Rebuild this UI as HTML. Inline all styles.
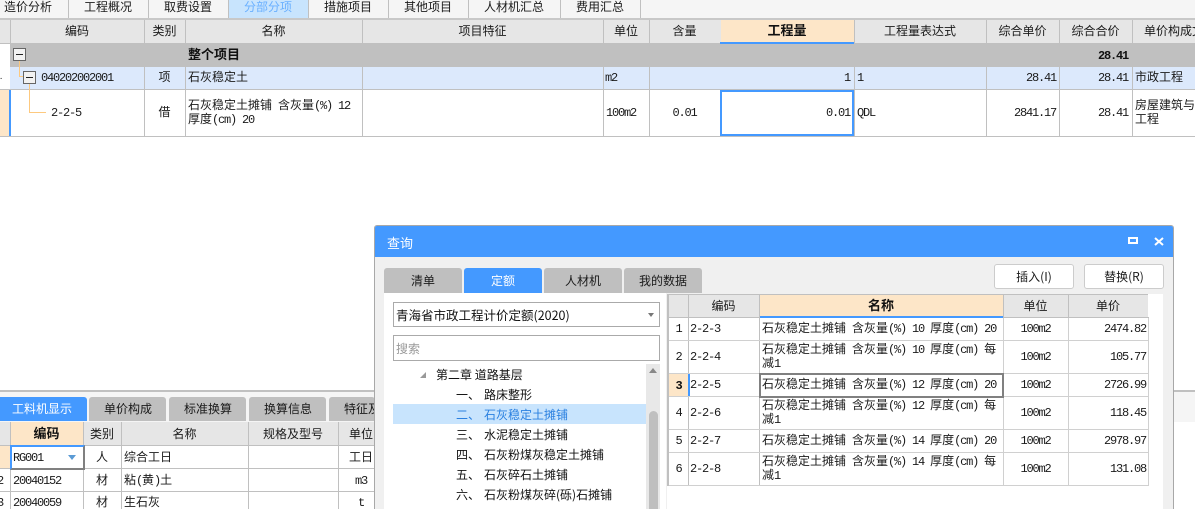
<!DOCTYPE html>
<html lang="zh"><head><meta charset="utf-8"><title>查询</title>
<style>
html,body{margin:0;padding:0;background:#fff}
#p{position:relative;width:1195px;height:509px;overflow:hidden;background:#fff;font:12px/14px "WenQuanYi Zen Hei","Noto Sans CJK SC",sans-serif;color:#1a1a1a}
#p div,#p span.t{position:absolute}
span.t{white-space:pre;height:14px}
i{font:normal 12px/14px "Liberation Mono",monospace;letter-spacing:-1.2px}
.c{text-align:center}.r{text-align:right}
.s{font-family:"Noto Sans CJK SC",sans-serif}
.hb{font-weight:bold;color:#111;font-size:13px}
.v{width:1px;background:#c0c0c0}
.h{height:1px;background:#c0c0c0}
.g{background:#d0d0d0}
.tab{background:#bfbfbf;border-radius:3px 3px 0 0}
</style></head><body><div id="p">

<!-- top tabs -->
<div style="left:0;top:0;width:1195px;height:18px;background:#f5f5f5"></div>
<div style="left:229px;top:0;width:79px;height:18px;background:#c8e4fd"></div>
<div class="h" style="left:0;top:18px;width:1195px;height:2px;background:#c8c8c8"></div>
<div class="v" style="left:68px;top:0;height:18px"></div>
<div class="v" style="left:148px;top:0;height:18px"></div>
<div class="v" style="left:228px;top:0;height:18px"></div>
<div class="v" style="left:308px;top:0;height:18px"></div>
<div class="v" style="left:388px;top:0;height:18px"></div>
<div class="v" style="left:468px;top:0;height:18px"></div>
<div class="v" style="left:560px;top:0;height:18px"></div>
<div class="v" style="left:640px;top:0;height:18px"></div>
<span class="t" style="left:4px;top:0">造价分析</span>
<span class="t" style="left:84px;top:0">工程概况</span>
<span class="t" style="left:164px;top:0">取费设置</span>
<span class="t" style="left:244px;top:0;color:#6ab0ff">分部分项</span>
<span class="t" style="left:324px;top:0">措施项目</span>
<span class="t" style="left:404px;top:0">其他项目</span>
<span class="t" style="left:484px;top:0">人材机汇总</span>
<span class="t" style="left:576px;top:0">费用汇总</span>

<!-- top table -->
<div style="left:0;top:20px;width:1195px;height:23px;background:#e6e6e6"></div>
<div style="left:721px;top:20px;width:133px;height:22px;background:#fde6c8"></div>
<div style="left:720px;top:42px;width:134px;height:2px;background:#4499ff"></div>
<div style="left:10px;top:67px;width:1185px;height:22px;background:#dce9fc"></div>
<div style="left:0;top:90px;width:9px;height:46px;background:#fde6c8"></div>
<div style="left:9px;top:90px;width:2px;height:46px;background:#4499ff"></div>
<div class="v" style="left:10px;top:20px;height:47px"></div>
<div class="v" style="left:144px;top:20px;height:116px"></div>
<div class="v" style="left:185px;top:20px;height:116px"></div>
<div class="v" style="left:362px;top:20px;height:116px"></div>
<div class="v" style="left:603px;top:20px;height:116px"></div>
<div class="v" style="left:649px;top:20px;height:116px"></div>
<div class="v" style="left:986px;top:20px;height:116px"></div>
<div class="v" style="left:1059px;top:20px;height:116px"></div>
<div class="v" style="left:1132px;top:20px;height:116px"></div>
<div class="v" style="left:854px;top:20px;height:116px"></div>
<div class="h" style="left:0;top:43px;width:720px"></div>
<div class="h" style="left:854px;top:43px;width:341px"></div>
<div style="left:11px;top:44px;width:1184px;height:22px;background:#c0c0c0"></div>
<div class="h" style="left:10px;top:66px;width:1185px"></div>
<div class="h" style="left:0;top:89px;width:1195px"></div>
<div class="h" style="left:0;top:136px;width:1195px"></div>
<div style="left:720px;top:90px;width:130px;height:42px;border:2px solid #4499ff"></div>

<span class="t c" style="left:10px;top:24px;width:134px">编码</span>
<span class="t c" style="left:144px;top:24px;width:41px">类别</span>
<span class="t c" style="left:185px;top:24px;width:177px">名称</span>
<span class="t c" style="left:362px;top:24px;width:241px">项目特征</span>
<span class="t c" style="left:603px;top:24px;width:46px">单位</span>
<span class="t c" style="left:649px;top:24px;width:71px">含量</span>
<span class="t c hb" style="left:720px;top:23px;width:134px">工程量</span>
<span class="t c" style="left:854px;top:24px;width:132px">工程量表达式</span>
<span class="t c" style="left:986px;top:24px;width:73px">综合单价</span>
<span class="t c" style="left:1059px;top:24px;width:73px">综合合价</span>
<span class="t" style="left:1144px;top:24px">单价构成文件</span>

<!-- tree -->
<div style="left:19px;top:60px;width:1px;height:17px;background:#fdc97f"></div>
<div style="left:19px;top:76px;width:5px;height:1px;background:#fdc97f"></div>
<div style="left:29px;top:83px;width:1px;height:30px;background:#fdc97f"></div>
<div style="left:29px;top:112px;width:17px;height:1px;background:#fdc97f"></div>
<div style="left:13px;top:48px;width:11px;height:11px;border:1px solid #666;background:#f2f2f2"></div>
<div style="left:16px;top:54px;width:7px;height:1px;background:#222"></div>
<div style="left:23px;top:71px;width:11px;height:11px;border:1px solid #666;background:#f2f2f2"></div>
<div style="left:26px;top:77px;width:7px;height:1px;background:#222"></div>

<span class="t hb" style="left:188px;top:47px">整个项目</span>
<span class="t r hb" style="left:1059px;top:47px;width:69px"><i style="font-weight:bold">28.41</i></span>

<span class="t" style="left:0;top:70px;font-size:8px">.</span>
<span class="t" style="left:41px;top:70px"><i>040202002001</i></span>
<span class="t c" style="left:144px;top:70px;width:41px">项</span>
<span class="t" style="left:188px;top:70px">石灰稳定土</span>
<span class="t" style="left:605px;top:70px"><i>m2</i></span>
<span class="t r" style="left:720px;top:70px;width:130px"><i>1</i></span>
<span class="t" style="left:857px;top:70px"><i>1</i></span>
<span class="t r" style="left:986px;top:70px;width:70px"><i>28.41</i></span>
<span class="t r" style="left:1059px;top:70px;width:69px"><i>28.41</i></span>
<span class="t" style="left:1135px;top:70px">市政工程</span>

<span class="t" style="left:51px;top:105px"><i>2-2-5</i></span>
<span class="t c" style="left:144px;top:105px;width:41px">借</span>
<span class="t" style="left:188px;top:98px">石灰稳定土摊铺<i> </i>含灰量<i>(%) 12</i></span>
<span class="t" style="left:188px;top:112px">厚度<i>(cm) 20</i></span>
<span class="t" style="left:606px;top:105px"><i>100m2</i></span>
<span class="t c" style="left:649px;top:105px;width:71px"><i>0.01</i></span>
<span class="t r" style="left:720px;top:105px;width:130px"><i>0.01</i></span>
<span class="t" style="left:857px;top:105px"><i>QDL</i></span>
<span class="t r" style="left:986px;top:105px;width:70px"><i>2841.17</i></span>
<span class="t r" style="left:1059px;top:105px;width:69px"><i>28.41</i></span>
<span class="t" style="left:1135px;top:98px">房屋建筑与</span>
<span class="t" style="left:1135px;top:112px">工程</span>

<!-- bottom area -->
<div style="left:0;top:390px;width:1195px;height:2px;background:#c0c0c0"></div>
<div style="left:0;top:392px;width:1195px;height:30px;background:#f5f5f5"></div>
<div style="left:0;top:397px;width:87px;height:24px;background:#4499ff;border-radius:0 3px 0 0"></div>
<div class="tab" style="left:89px;top:397px;width:77px;height:24px"></div>
<div class="tab" style="left:169px;top:397px;width:77px;height:24px"></div>
<div class="tab" style="left:249px;top:397px;width:77px;height:24px"></div>
<div class="tab" style="left:329px;top:397px;width:46px;height:24px"></div>
<span class="t" style="left:12px;top:402px;color:#fff">工料机显示</span>
<span class="t" style="left:104px;top:402px">单价构成</span>
<span class="t" style="left:184px;top:402px">标准换算</span>
<span class="t" style="left:264px;top:402px">换算信息</span>
<span class="t" style="left:344px;top:402px;width:30px;overflow:hidden">特征及</span>
<div style="left:0;top:422px;width:374px;height:23px;background:#e6e6e6"></div>
<div style="left:11px;top:422px;width:72px;height:23px;background:#fde6c8"></div>
<div style="left:0;top:446px;width:10px;height:22px;background:#fde6c8"></div>
<div class="v" style="left:10px;top:422px;height:87px"></div>
<div class="v" style="left:83px;top:422px;height:87px"></div>
<div class="v" style="left:121px;top:422px;height:87px"></div>
<div class="v" style="left:248px;top:422px;height:87px"></div>
<div class="v" style="left:338px;top:422px;height:87px"></div>
<div class="h" style="left:0;top:445px;width:374px"></div>
<div class="h" style="left:0;top:468px;width:374px"></div>
<div class="h" style="left:0;top:491px;width:374px"></div>
<div style="left:10px;top:445px;width:71px;height:21px;border:2px solid #808080;border-top-color:#4499ff;border-left-color:#4499ff;background:#fff"></div>
<span class="t c hb" style="left:10px;top:426px;width:73px">编码</span>
<span class="t c" style="left:83px;top:427px;width:38px">类别</span>
<span class="t c" style="left:121px;top:427px;width:127px">名称</span>
<span class="t c" style="left:248px;top:427px;width:90px">规格及型号</span>
<span class="t" style="left:349px;top:427px">单位</span>
<span class="t" style="left:13px;top:450px"><i>RG001</i></span>
<div style="left:68px;top:455px;width:0;height:0;border:4px solid transparent;border-top:5px solid #5b9bd5;border-bottom:0"></div>
<span class="t c" style="left:83px;top:450px;width:38px">人</span>
<span class="t" style="left:124px;top:450px">综合工日</span>
<span class="t" style="left:349px;top:450px">工日</span>
<span class="t" style="left:-3px;top:473px"><i>2</i></span>
<span class="t" style="left:13px;top:473px"><i>20040152</i></span>
<span class="t c" style="left:83px;top:473px;width:38px">材</span>
<span class="t" style="left:124px;top:473px">粘<i>(</i>黄<i>)</i>土</span>
<span class="t" style="left:355px;top:473px"><i>m3</i></span>
<span class="t" style="left:-3px;top:495px"><i>3</i></span>
<span class="t" style="left:13px;top:495px"><i>20040059</i></span>
<span class="t c" style="left:83px;top:495px;width:38px">材</span>
<span class="t" style="left:124px;top:495px">生石灰</span>
<span class="t" style="left:358px;top:495px"><i>t</i></span>

<!-- dialog -->
<div style="left:374px;top:225px;width:798px;height:290px;border:1px solid #a8a8a8;border-radius:3px 3px 0 0;background:#f0f0f0"></div>
<div style="left:375px;top:226px;width:798px;height:31px;background:#4499ff;border-radius:2px 2px 0 0"></div>
<span class="t s" style="left:387px;top:236px;color:#fff;font-size:13px">查询</span>
<div style="left:1128px;top:237px;width:6px;height:3px;border:2px solid #fff"></div>
<svg style="position:absolute;left:1154px;top:237px" width="10" height="9"><path d="M1 1L9 8M9 1L1 8" stroke="#fff" stroke-width="2" fill="none"/></svg>

<div class="tab" style="left:384px;top:268px;width:78px;height:25px"></div>
<div class="tab" style="left:464px;top:268px;width:78px;height:25px;background:#4499ff"></div>
<div class="tab" style="left:544px;top:268px;width:78px;height:25px"></div>
<div class="tab" style="left:624px;top:268px;width:78px;height:25px"></div>
<span class="t s" style="left:411px;top:274px">清单</span>
<span class="t s" style="left:491px;top:274px;color:#fff">定额</span>
<span class="t s" style="left:565px;top:274px">人材机</span>
<span class="t s" style="left:639px;top:274px">我的数据</span>

<div style="left:994px;top:264px;width:78px;height:23px;background:#fff;border:1px solid #ccc;border-radius:3px"></div>
<div style="left:1084px;top:264px;width:78px;height:23px;background:#fff;border:1px solid #ccc;border-radius:3px"></div>
<span class="t s c" style="left:994px;top:270px;width:80px">插入(I)</span>
<span class="t s c" style="left:1084px;top:270px;width:80px">替换(R)</span>

<!-- left panel -->
<div style="left:384px;top:293px;width:282px;height:216px;background:#fff"></div>
<div style="left:393px;top:302px;width:265px;height:23px;border:1px solid #aaa;background:#fff"></div>
<span class="t s" style="left:396px;top:308px;color:#111;font-size:12.5px">青海省市政工程计价定额(2020)</span>
<div style="left:648px;top:313px;width:0;height:0;border:3.5px solid transparent;border-top:4px solid #777;border-bottom:0"></div>
<div style="left:393px;top:335px;width:265px;height:24px;border:1px solid #aaa;background:#fff"></div>
<span class="t s" style="left:396px;top:342px;color:#999">搜索</span>

<div style="left:646px;top:364px;width:14px;height:145px;background:#e8e8e8"></div>
<div style="left:649px;top:411px;width:9px;height:98px;background:#bfbfbf;border-radius:5px 5px 0 0"></div>
<div style="left:649px;top:368px;width:0;height:0;border:4px solid transparent;border-bottom:5px solid #888;border-top:0"></div>
<div style="left:393px;top:404px;width:253px;height:20px;background:#c8e4fd"></div>
<div style="left:420px;top:372px;width:0;height:0;border-bottom:6px solid #999;border-left:6px solid transparent"></div>
<span class="t s" style="left:436px;top:368px;color:#111">第二章 道路基层</span>
<span class="t s" style="left:456px;top:388px;color:#111">一、</span><span class="t s" style="left:484px;top:388px;color:#111">路床整形</span>
<span class="t s" style="left:456px;top:408px;color:#2a80e0">二、</span><span class="t s" style="left:484px;top:408px;color:#2a80e0">石灰稳定土摊铺</span>
<span class="t s" style="left:456px;top:428px;color:#111">三、</span><span class="t s" style="left:484px;top:428px;color:#111">水泥稳定土摊铺</span>
<span class="t s" style="left:456px;top:448px;color:#111">四、</span><span class="t s" style="left:484px;top:448px;color:#111">石灰粉煤灰稳定土摊铺</span>
<span class="t s" style="left:456px;top:468px;color:#111">五、</span><span class="t s" style="left:484px;top:468px;color:#111">石灰碎石土摊铺</span>
<span class="t s" style="left:456px;top:488px;color:#111">六、</span><span class="t s" style="left:484px;top:488px;color:#111">石灰粉煤灰碎(砾)石摊铺</span>

<!-- right grid -->
<div style="left:667px;top:294px;width:496px;height:215px;background:#fff"></div>
<div style="left:667px;top:294px;width:481px;height:1px;background:#c0c0c0"></div>
<div style="left:667px;top:295px;width:481px;height:22px;background:#e6e6e6"></div>
<div style="left:760px;top:295px;width:243px;height:21px;background:#fde6c8"></div>
<div style="left:759px;top:316px;width:244px;height:2px;background:#4499ff"></div>
<div style="left:667px;top:295px;width:2px;height:191px;background:#c0c0c0"></div>
<div class="v" style="left:688px;top:295px;height:191px"></div>
<div class="v" style="left:759px;top:295px;height:191px"></div>
<div class="v g" style="left:1003px;top:318px;height:168px"></div>
<div class="v g" style="left:1068px;top:318px;height:168px"></div>
<div class="v g" style="left:1148px;top:318px;height:168px"></div>
<div class="v" style="left:1003px;top:295px;height:22px"></div>
<div class="v" style="left:1068px;top:295px;height:22px"></div>
<div class="h" style="left:667px;top:317px;width:92px"></div>
<div class="h" style="left:1003px;top:317px;width:146px"></div>
<div class="h g" style="left:669px;top:340px;width:480px"></div>
<div class="h g" style="left:669px;top:373px;width:480px"></div>
<div class="h g" style="left:669px;top:396px;width:480px"></div>
<div class="h g" style="left:669px;top:429px;width:480px"></div>
<div class="h g" style="left:669px;top:452px;width:480px"></div>
<div class="h g" style="left:669px;top:485px;width:480px"></div>
<div style="left:669px;top:374px;width:19px;height:22px;background:#fde6c8"></div>
<div style="left:688px;top:374px;width:2px;height:22px;background:#4499ff"></div>
<div style="left:759px;top:373px;width:241px;height:21px;border:2px solid #808080"></div>

<span class="t c" style="left:688px;top:299px;width:71px">编码</span>
<span class="t c hb" style="left:759px;top:298px;width:244px">名称</span>
<span class="t c" style="left:1003px;top:299px;width:65px">单位</span>
<span class="t c" style="left:1068px;top:299px;width:80px">单价</span>

<span class="t c" style="left:669px;top:321px;width:19px"><i>1</i></span>
<span class="t" style="left:690px;top:321px"><i>2-2-3</i></span>
<span class="t" style="left:762px;top:321px">石灰稳定土摊铺<i> </i>含灰量<i>(%) 10 </i>厚度<i>(cm) 20</i></span>
<span class="t c" style="left:1003px;top:321px;width:65px"><i>100m2</i></span>
<span class="t r" style="left:1068px;top:321px;width:78px"><i>2474.82</i></span>

<span class="t c" style="left:669px;top:349px;width:19px"><i>2</i></span>
<span class="t" style="left:690px;top:349px"><i>2-2-4</i></span>
<span class="t" style="left:762px;top:342px">石灰稳定土摊铺<i> </i>含灰量<i>(%) 10 </i>厚度<i>(cm) </i>每</span>
<span class="t" style="left:762px;top:356px">减<i>1</i></span>
<span class="t c" style="left:1003px;top:349px;width:65px"><i>100m2</i></span>
<span class="t r" style="left:1068px;top:349px;width:78px"><i>105.77</i></span>

<span class="t c hb" style="left:669px;top:377px;width:19px"><i style="font-weight:bold">3</i></span>
<span class="t" style="left:690px;top:377px"><i>2-2-5</i></span>
<span class="t" style="left:762px;top:377px">石灰稳定土摊铺<i> </i>含灰量<i>(%) 12 </i>厚度<i>(cm) 20</i></span>
<span class="t c" style="left:1003px;top:377px;width:65px"><i>100m2</i></span>
<span class="t r" style="left:1068px;top:377px;width:78px"><i>2726.99</i></span>

<span class="t c" style="left:669px;top:405px;width:19px"><i>4</i></span>
<span class="t" style="left:690px;top:405px"><i>2-2-6</i></span>
<span class="t" style="left:762px;top:398px">石灰稳定土摊铺<i> </i>含灰量<i>(%) 12 </i>厚度<i>(cm) </i>每</span>
<span class="t" style="left:762px;top:412px">减<i>1</i></span>
<span class="t c" style="left:1003px;top:405px;width:65px"><i>100m2</i></span>
<span class="t r" style="left:1068px;top:405px;width:78px"><i>118.45</i></span>

<span class="t c" style="left:669px;top:433px;width:19px"><i>5</i></span>
<span class="t" style="left:690px;top:433px"><i>2-2-7</i></span>
<span class="t" style="left:762px;top:433px">石灰稳定土摊铺<i> </i>含灰量<i>(%) 14 </i>厚度<i>(cm) 20</i></span>
<span class="t c" style="left:1003px;top:433px;width:65px"><i>100m2</i></span>
<span class="t r" style="left:1068px;top:433px;width:78px"><i>2978.97</i></span>

<span class="t c" style="left:669px;top:461px;width:19px"><i>6</i></span>
<span class="t" style="left:690px;top:461px"><i>2-2-8</i></span>
<span class="t" style="left:762px;top:454px">石灰稳定土摊铺<i> </i>含灰量<i>(%) 14 </i>厚度<i>(cm) </i>每</span>
<span class="t" style="left:762px;top:468px">减<i>1</i></span>
<span class="t c" style="left:1003px;top:461px;width:65px"><i>100m2</i></span>
<span class="t r" style="left:1068px;top:461px;width:78px"><i>131.08</i></span>

</div></body></html>
